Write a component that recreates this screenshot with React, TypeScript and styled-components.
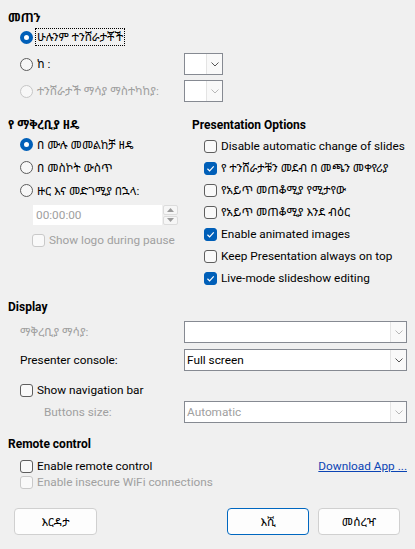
import React from 'react'
import styled, { createGlobalStyle, css } from 'styled-components'

const GlobalStyle = createGlobalStyle`
  html, body {
    margin: 0;
    padding: 0;
    background: #f0f0f0;
  }
  body {
    font-family: Roboto, "Noto Sans Ethiopic", "Abyssinica SIL", "Noto Sans", "DejaVu Sans", sans-serif;
    font-size: 11.8px;
    line-height: 16px;
    color: #000;
  }
`

const DialogSt = styled.div`
  width: 415px;
  height: 549px;
  box-sizing: border-box;
  padding: 10px 8px 0;
  display: flex;
  flex-direction: column;
`

const TitleSt = styled.div<{ $mt?: number }>`
  font-weight: 700;
  font-size: 12px;
  line-height: 16px;
  margin-top: ${({ $mt }) => $mt ?? 0}px;
`

const LabelSt = styled.span<{ $disabled?: boolean; $focus?: boolean }>`
  color: ${({ $disabled }) => ($disabled ? '#a0a0a0' : '#000')};
  white-space: nowrap;
  ${({ $focus }) =>
    $focus &&
    css`
      outline: 1px dotted #000;
      outline-offset: 0;
      padding: 0 1px;
      margin-left: -1px;
    `}
`

/* radio + checkbox */

const RadioSt = styled.span<{ $checked?: boolean; $disabled?: boolean }>`
  width: 13px;
  height: 13px;
  box-sizing: border-box;
  border-radius: 50%;
  flex: none;
  background: #f7f7f7;
  border: 1px solid ${({ $disabled }) => ($disabled ? '#c6c6c6' : '#5c5c5c')};
  ${({ $checked }) =>
    $checked &&
    css`
      border: 4px solid #005fb8;
      background: #fff;
    `}
`

const CheckSt = styled.span<{ $checked?: boolean; $disabled?: boolean }>`
  width: 13px;
  height: 13px;
  box-sizing: border-box;
  border-radius: 3px;
  flex: none;
  display: flex;
  align-items: center;
  justify-content: center;
  background: #f9f9f9;
  border: 1px solid ${({ $disabled }) => ($disabled ? '#c9c9c9' : '#5e5e5e')};
  ${({ $checked }) =>
    $checked &&
    css`
      background: #005fb8;
      border-color: #005fb8;
    `}
`

const ChoiceRowSt = styled.div<{ $h?: number; $indent?: number; $mt?: number }>`
  display: flex;
  align-items: center;
  gap: 4px;
  height: ${({ $h }) => $h ?? 22}px;
  padding-left: ${({ $indent }) => $indent ?? 12}px;
  margin-top: ${({ $mt }) => $mt ?? 0}px;
`

const Radio = ({ label, checked, disabled, focus }: { label: string; checked?: boolean; disabled?: boolean; focus?: boolean }) => (
  <>
    <RadioSt $checked={checked} $disabled={disabled} />
    <LabelSt $disabled={disabled} $focus={focus}>{label}</LabelSt>
  </>
)

const Check = ({ label, checked, disabled }: { label: string; checked?: boolean; disabled?: boolean }) => (
  <>
    <CheckSt $checked={checked} $disabled={disabled}>
      {checked && (
        <svg width="9" height="9" viewBox="0 0 10 10">
          <path d="M1.6 5.3 L4 7.6 L8.6 2.6" stroke="#fff" strokeWidth="1.3" fill="none" />
        </svg>
      )}
    </CheckSt>
    <LabelSt $disabled={disabled}>{label}</LabelSt>
  </>
)

/* combo box */

const ComboSt = styled.div<{ $disabled?: boolean }>`
  height: 22px;
  box-sizing: border-box;
  border: 1px solid #868a92;
  background: #fff;
  display: flex;
  align-items: center;
  color: ${({ $disabled }) => ($disabled ? '#a0a0a0' : '#000')};
`

const ComboTextSt = styled.span`
  flex: 1;
  padding-left: 2px;
  white-space: nowrap;
  overflow: hidden;
`

const DropBtnSt = styled.span`
  width: 16px;
  align-self: stretch;
  box-sizing: border-box;
  background: #f9f9f9;
  border-left: 1px solid #e4e4e4;
  display: flex;
  align-items: center;
  justify-content: center;
`

const Combo = ({ value = '', disabled }: { value?: string; disabled?: boolean }) => (
  <ComboSt $disabled={disabled}>
    <ComboTextSt>{value}</ComboTextSt>
    <DropBtnSt>
      <svg width="8" height="5" viewBox="0 0 8 5">
        <path d="M0.5 0.5 L4 4 L7.5 0.5" stroke={disabled ? '#b8b8b8' : '#555'} strokeWidth="1" fill="none" />
      </svg>
    </DropBtnSt>
  </ComboSt>
)

/* range */

const RangeGridSt = styled.div`
  display: grid;
  grid-template-columns: 164px 39px;
  grid-auto-rows: 22px;
  row-gap: 5px;
  padding-left: 12px;
`

const GridCellSt = styled.div`
  display: flex;
  align-items: center;
  gap: 4px;
`

/* two columns */

const ColumnsSt = styled.div`
  display: grid;
  grid-template-columns: 184px 1fr;
  margin-top: 15px;
`

const ColumnSt = styled.div`
  display: flex;
  flex-direction: column;
`

const SpinRowSt = styled.div`
  display: flex;
  height: 20px;
  margin-top: 3px;
  padding-left: 25px;
`

const SpinFieldSt = styled.div`
  width: 129px;
  box-sizing: border-box;
  padding-left: 3px;
  background: #fff;
  color: #a0a0a0;
  line-height: 20px;
`

const SpinButtonsSt = styled.div`
  width: 15px;
  display: flex;
  flex-direction: column;
  gap: 1px;
  margin-left: 1px;
`

const SpinBtnSt = styled.span`
  flex: 1;
  background: #f6f6f6;
  border: 1px solid #dcdcdc;
  border-radius: 2px;
  display: flex;
  align-items: center;
  justify-content: center;
`

const OptionListSt = styled.div`
  display: flex;
  flex-direction: column;
  margin-top: 2px;
`

/* display */

const FormRowSt = styled.div<{ $mt?: number; $h?: number }>`
  display: grid;
  grid-template-columns: 164px 1fr;
  align-items: center;
  padding-left: 12px;
  height: ${({ $h }) => $h ?? 22}px;
  margin-top: ${({ $mt }) => $mt ?? 0}px;
`

const FormLabelSt = styled.span<{ $disabled?: boolean; $indent?: number }>`
  color: ${({ $disabled }) => ($disabled ? '#a0a0a0' : '#000')};
  padding-left: ${({ $indent }) => $indent ?? 0}px;
  white-space: nowrap;
`

/* remote */

const RemoteRowSt = styled.div<{ $mt?: number }>`
  display: flex;
  align-items: center;
  height: 16px;
  padding-left: 12px;
  gap: 4px;
  margin-top: ${({ $mt }) => $mt ?? 0}px;
`

const LinkSt = styled.a`
  margin-left: auto;
  color: #0b44b4;
  text-decoration: underline;
  cursor: pointer;
`

/* buttons */

const ButtonBarSt = styled.div`
  display: flex;
  margin-top: 18px;
  padding: 0 7px 0 6px;
  gap: 9px;
`

const ButtonSt = styled.button<{ $default?: boolean; $w: number }>`
  width: ${({ $w }) => $w}px;
  height: 27px;
  box-sizing: border-box;
  border-radius: 4px;
  background: #fdfdfd;
  border: 1px solid ${({ $default }) => ($default ? '#0067c0' : '#d0d0d0')};
  font: inherit;
  color: #000;
  padding: 0;
  &:first-child {
    margin-right: auto;
  }
`

export default function App() {
  return (
    <>
      <GlobalStyle />
      <DialogSt>
        <TitleSt>መጠን</TitleSt>
        <RangeGridSt>
          <GridCellSt>
            <Radio label="ሁሉንም ተንሸራታቾች" checked focus />
          </GridCellSt>
          <div />
          <GridCellSt>
            <Radio label="ከ :" />
          </GridCellSt>
          <Combo />
          <GridCellSt>
            <Radio label="ተንሸራታች ማሳያ ማስተካከያ:" disabled />
          </GridCellSt>
          <Combo disabled />
        </RangeGridSt>

        <ColumnsSt>
          <ColumnSt>
            <TitleSt>የ ማቅረቢያ ዘዴ</TitleSt>
            <ChoiceRowSt $h={23}>
              <Radio label="በ ሙሉ መመልከቻ ዘዴ" checked />
            </ChoiceRowSt>
            <ChoiceRowSt $h={23}>
              <Radio label="በ መስኮት ውስጥ" />
            </ChoiceRowSt>
            <ChoiceRowSt $h={23}>
              <Radio label="ዙር እና መድገሚያ በኋላ:" />
            </ChoiceRowSt>
            <SpinRowSt>
              <SpinFieldSt>00:00:00</SpinFieldSt>
              <SpinButtonsSt>
                <SpinBtnSt>
                  <svg width="7" height="4" viewBox="0 0 7 4">
                    <path d="M0 4 L3.5 0 L7 4 Z" fill="#9a9a9a" />
                  </svg>
                </SpinBtnSt>
                <SpinBtnSt>
                  <svg width="7" height="4" viewBox="0 0 7 4">
                    <path d="M0 0 L3.5 4 L7 0 Z" fill="#9a9a9a" />
                  </svg>
                </SpinBtnSt>
              </SpinButtonsSt>
            </SpinRowSt>
            <ChoiceRowSt $indent={24} $mt={4}>
              <Check label="Show logo during pause" disabled />
            </ChoiceRowSt>
          </ColumnSt>

          <ColumnSt>
            <TitleSt>Presentation Options</TitleSt>
            <OptionListSt>
              <ChoiceRowSt><Check label="Disable automatic change of slides" /></ChoiceRowSt>
              <ChoiceRowSt><Check label="የ ተንሸራታቹን መደብ በ መጫን መቀየሪያ" checked /></ChoiceRowSt>
              <ChoiceRowSt><Check label="የአይጥ መጠቆሚያ የሚታየው" /></ChoiceRowSt>
              <ChoiceRowSt><Check label="የአይጥ መጠቆሚያ እንደ ብዕር" /></ChoiceRowSt>
              <ChoiceRowSt><Check label="Enable animated images" checked /></ChoiceRowSt>
              <ChoiceRowSt><Check label="Keep Presentation always on top" /></ChoiceRowSt>
              <ChoiceRowSt><Check label="Live-mode slideshow editing" checked /></ChoiceRowSt>
            </OptionListSt>
          </ColumnSt>
        </ColumnsSt>

        <TitleSt $mt={10}>Display</TitleSt>
        <FormRowSt $mt={6}>
          <FormLabelSt $disabled>ማቅረቢያ ማሳያ:</FormLabelSt>
          <Combo disabled />
        </FormRowSt>
        <FormRowSt $mt={6}>
          <FormLabelSt>Presenter console:</FormLabelSt>
          <Combo value="Full screen" />
        </FormRowSt>
        <ChoiceRowSt $h={18} $mt={10}>
          <Check label="Show navigation bar" />
        </ChoiceRowSt>
        <FormRowSt $mt={2}>
          <FormLabelSt $disabled $indent={24}>Buttons size:</FormLabelSt>
          <Combo value="Automatic" disabled />
        </FormRowSt>

        <TitleSt $mt={13}>Remote control</TitleSt>
        <RemoteRowSt $mt={6}>
          <Check label="Enable remote control" />
          <LinkSt>Download App ...</LinkSt>
        </RemoteRowSt>
        <RemoteRowSt>
          <Check label="Enable insecure WiFi connections" disabled />
        </RemoteRowSt>

        <ButtonBarSt>
          <ButtonSt $w={83}>እርዳታ</ButtonSt>
          <ButtonSt $w={82} $default>እሺ</ButtonSt>
          <ButtonSt $w={82}>መሰረዣ</ButtonSt>
        </ButtonBarSt>
      </DialogSt>
    </>
  )
}
